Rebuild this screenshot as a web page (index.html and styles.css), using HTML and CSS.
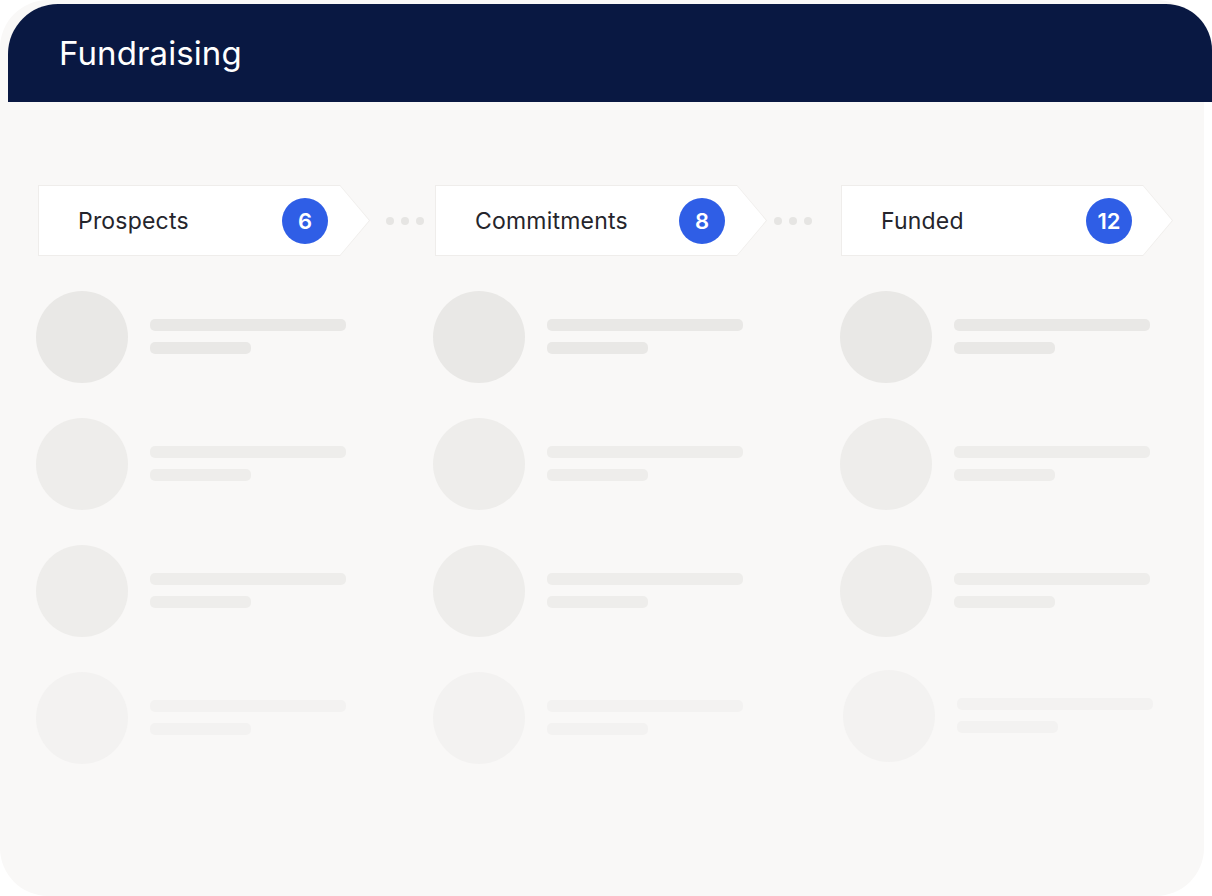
FILE: index.html
```html
<!DOCTYPE html>
<html>
<head>
    <title>Fundraising</title>
    <link rel="stylesheet" href="styles.css">
</head>
<body>
    <div class="card">
        <header class="header">
            <h1>Fundraising</h1>
        </header>

        <div class="board">
            <div class="stages">
                <div class="stage">
                    <div class="stage-body">
                        <span class="stage-name">Prospects</span>
                        <span class="count">6</span>
                    </div>
                </div>
                <div class="dots dots-first"><i></i><i></i><i></i></div>
                <div class="stage">
                    <div class="stage-body">
                        <span class="stage-name">Commitments</span>
                        <span class="count">8</span>
                    </div>
                </div>
                <div class="dots dots-second"><i></i><i></i><i></i></div>
                <div class="stage stage-last">
                    <div class="stage-body">
                        <span class="stage-name">Funded</span>
                        <span class="count">12</span>
                    </div>
                </div>
            </div>

            <div class="columns">
                <div class="column column-prospects">
                    <div class="row shade-1"><div class="avatar"></div><div class="lines"><div class="line"></div><div class="line short"></div></div></div>
                    <div class="row shade-2"><div class="avatar"></div><div class="lines"><div class="line"></div><div class="line short"></div></div></div>
                    <div class="row shade-2"><div class="avatar"></div><div class="lines"><div class="line"></div><div class="line short"></div></div></div>
                    <div class="row shade-3"><div class="avatar"></div><div class="lines"><div class="line"></div><div class="line short"></div></div></div>
                </div>
                <div class="column column-commitments">
                    <div class="row shade-1"><div class="avatar"></div><div class="lines"><div class="line"></div><div class="line short"></div></div></div>
                    <div class="row shade-2"><div class="avatar"></div><div class="lines"><div class="line"></div><div class="line short"></div></div></div>
                    <div class="row shade-2"><div class="avatar"></div><div class="lines"><div class="line"></div><div class="line short"></div></div></div>
                    <div class="row shade-3"><div class="avatar"></div><div class="lines"><div class="line"></div><div class="line short"></div></div></div>
                </div>
                <div class="column">
                    <div class="row shade-1"><div class="avatar"></div><div class="lines"><div class="line"></div><div class="line short"></div></div></div>
                    <div class="row shade-2"><div class="avatar"></div><div class="lines"><div class="line"></div><div class="line short"></div></div></div>
                    <div class="row shade-2"><div class="avatar"></div><div class="lines"><div class="line"></div><div class="line short"></div></div></div>
                    <div class="row shade-3 row-moving"><div class="avatar"></div><div class="lines"><div class="line"></div><div class="line short"></div></div></div>
                </div>
            </div>
        </div>
    </div>
</body>
</html>
```

FILE: styles.css
```css
body {
    margin: 0;
    background-color: #fff;
    font-family: Inter, "Noto Sans", sans-serif;
    overflow: hidden;
}

.card {
    width: 1204px;
    height: 896px;
    padding-top: 4px;
    box-sizing: border-box;
    background-color: #f9f8f7;
    border-radius: 48px;
}

.header {
    height: 98px;
    margin-left: 8px;
    margin-right: -8px;
    padding-left: 51px;
    display: flex;
    align-items: center;
    background-color: #091842;
    border-radius: 50px 46px 0 0;
}

.header h1 {
    margin: 0;
    color: #fff;
    font-size: 33px;
    font-weight: 400;
    letter-spacing: 0.1px;
}

.board {
    padding-top: 83px;
}

/* stage tabs */

.stages {
    display: flex;
    align-items: center;
    padding-left: 38px;
}

.stage {
    width: 332px;
    height: 71px;
    padding: 1px;
    box-sizing: border-box;
    background-color: #efedeb;
    clip-path: polygon(0 0, calc(100% - 30px) 0, 100% 50%, calc(100% - 30px) 100%, 0 100%);
}

.stage-body {
    height: 100%;
    padding: 0 41px 0 39px;
    display: flex;
    align-items: center;
    justify-content: space-between;
    background-color: #fff;
    clip-path: polygon(0 0, calc(100% - 29px) 0, 100% 50%, calc(100% - 29px) 100%, 0 100%);
}

.stage-last .stage-body {
    padding-right: 40px;
}

.stage-name {
    font-size: 23px;
    letter-spacing: 0.2px;
    color: #25252c;
}

.count {
    width: 46px;
    height: 46px;
    border-radius: 50%;
    background-color: #2f5ee6;
    color: #fff;
    font-size: 22px;
    font-weight: 600;
    display: flex;
    align-items: center;
    justify-content: center;
}

.dots {
    display: flex;
    gap: 7px;
}

.dots i {
    width: 8px;
    height: 8px;
    border-radius: 50%;
    background-color: #e6e5e3;
}

.dots-first {
    margin: 0 11px 0 16px;
}

.dots-second {
    margin: 0 29px 0 7px;
}

/* placeholder rows */

.columns {
    display: flex;
    padding: 35px 0 0 36px;
}

.column-prospects {
    width: 397px;
}

.column-commitments {
    width: 407px;
}

.row {
    display: flex;
    align-items: center;
    gap: 22px;
    margin-bottom: 35px;
}

.avatar {
    width: 92px;
    height: 92px;
    border-radius: 50%;
}

.lines {
    display: flex;
    flex-direction: column;
    gap: 11px;
    margin-top: -2px;
}

.line {
    width: 196px;
    height: 12px;
    border-radius: 5px;
}

.line.short {
    width: 101px;
}

.shade-1 .avatar,
.shade-1 .line {
    background-color: #e9e8e6;
}

.shade-2 .avatar,
.shade-2 .line {
    background-color: #eeedeb;
}

.shade-3 .avatar,
.shade-3 .line {
    background-color: #f3f2f1;
}

.row-moving {
    margin-left: 3px;
    margin-top: -2px;
}
```
